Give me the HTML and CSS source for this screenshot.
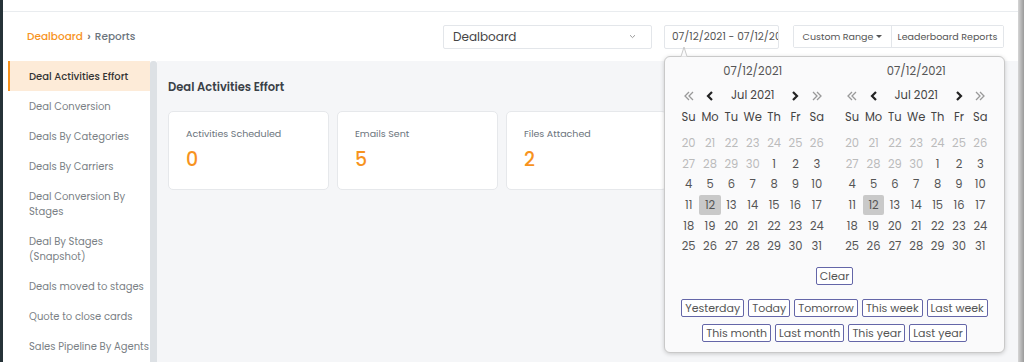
FILE: index.html
```html
<!DOCTYPE html>
<html lang="en">
<head>
    <meta charset="UTF-8" />
    <meta name="viewport" content="width=device-width, initial-scale=1.0" />
    <title>Reports</title>
    <link rel="stylesheet" href="styles.css">
</head>
<body>
<div class="app">
    <div class="rail"></div>

    <div class="page">
        <div class="topbar"></div>

        <header class="header">
            <div class="crumbs">
                <span class="crumb-link">Dealboard</span>
                <span class="crumb-sep">&rsaquo;</span>
                <span class="crumb-current">Reports</span>
            </div>

            <div class="tools">
                <div class="select">
                    <span>Dealboard</span>
                    <svg width="7" height="5" viewBox="0 0 7 5"><path d="M1 1.2 L3.5 3.6 L6 1.2" fill="none" stroke="#999" stroke-width="1"/></svg>
                </div>

                <div class="date-wrap">
                    <div class="date-input">07/12/2021 - 07/12/2021</div>

                    <div class="picker">
                        <svg class="picker-arrow" width="24" height="11" viewBox="0 0 24 11">
                            <path d="M0 10.5 L9 10.5 L12 1 L15 10.5 L24 10.5" fill="#fafafb" stroke="#c9c9c9" stroke-width="1"/>
                        </svg>

                        <div class="months">
                            <div class="cal" id="calLeft"></div>
                            <div class="cal" id="calRight"></div>
                        </div>

                        <div class="clear-row">
                            <button class="pbtn">Clear</button>
                        </div>

                        <div class="preset-row">
                            <button class="pbtn">Yesterday</button>
                            <button class="pbtn">Today</button>
                            <button class="pbtn">Tomorrow</button>
                            <button class="pbtn">This week</button>
                            <button class="pbtn">Last week</button>
                        </div>
                        <div class="preset-row">
                            <button class="pbtn">This month</button>
                            <button class="pbtn">Last month</button>
                            <button class="pbtn">This year</button>
                            <button class="pbtn">Last year</button>
                        </div>
                    </div>
                </div>

                <div class="btn-group">
                    <button class="gbtn gbtn-range">Custom Range <span class="caret"></span></button>
                    <button class="gbtn gbtn-board">Leaderboard Reports</button>
                </div>
            </div>
        </header>

        <div class="content">
            <aside class="sidebar">
                <div class="side-item active">Deal Activities Effort</div>
                <div class="side-item">Deal Conversion</div>
                <div class="side-item">Deals By Categories</div>
                <div class="side-item">Deals By Carriers</div>
                <div class="side-item">Deal Conversion By Stages</div>
                <div class="side-item">Deal By Stages (Snapshot)</div>
                <div class="side-item">Deals moved to stages</div>
                <div class="side-item">Quote to close cards</div>
                <div class="side-item">Sales Pipeline By Agents</div>
            </aside>
            <div class="side-scroll"></div>

            <main class="main">
                <h2 class="main-title">Deal Activities Effort</h2>
                <div class="cards">
                    <div class="card">
                        <div class="card-label">Activities Scheduled</div>
                        <div class="card-value">0</div>
                    </div>
                    <div class="card">
                        <div class="card-label">Emails Sent</div>
                        <div class="card-value">5</div>
                    </div>
                    <div class="card">
                        <div class="card-label">Files Attached</div>
                        <div class="card-value">2</div>
                    </div>
                    <div class="card">
                        <div class="card-label">Calls Logged</div>
                        <div class="card-value">0</div>
                    </div>
                    <div class="card">
                        <div class="card-label">Notes Added</div>
                        <div class="card-value">1</div>
                    </div>
                </div>
            </main>
        </div>
    </div>

    <div class="edge"></div>
</div>

<script>
    function chevron(dir, dbl) {
        var d = dir === "left" ? "M6 1 L2 5 L6 9" : "M2 1 L6 5 L2 9";
        if (dbl) {
            var d2 = dir === "left" ? "M10 1 L6 5 L10 9" : "M6 1 L10 5 L6 9";
            return '<svg width="12" height="10" viewBox="0 0 12 10"><path d="' + d + ' ' + d2 + '" fill="none" stroke="#999" stroke-width="1.3"/></svg>';
        }
        return '<svg width="8" height="10" viewBox="0 0 8 10"><path d="' + d + '" fill="none" stroke="#222" stroke-width="2.2"/></svg>';
    }

    function buildCalendar(el) {
        var html = '<div class="cal-title">07/12/2021</div>';
        html += '<div class="cal-nav">' +
            '<span class="nav-cell">' + chevron("left", true) + '</span>' +
            '<span class="nav-cell">' + chevron("left", false) + '</span>' +
            '<span class="nav-month">Jul 2021</span>' +
            '<span class="nav-cell">' + chevron("right", false) + '</span>' +
            '<span class="nav-cell">' + chevron("right", true) + '</span>' +
            '</div>';

        var days = ["Su", "Mo", "Tu", "We", "Th", "Fr", "Sa"];
        html += '<div class="cal-head">';
        days.forEach(function (d) { html += '<span>' + d + '</span>'; });
        html += '</div><div class="cal-grid">';

        var prev = [20, 21, 22, 23, 24, 25, 26, 27, 28, 29, 30];
        prev.forEach(function (n) { html += '<span class="day muted">' + n + '</span>'; });
        for (var i = 1; i <= 31; i++) {
            html += '<span class="day' + (i === 12 ? ' selected' : '') + '">' + i + '</span>';
        }
        html += '</div>';
        el.innerHTML = html;
    }

    buildCalendar(document.getElementById("calLeft"));
    buildCalendar(document.getElementById("calRight"));
</script>
</body>
</html>
```

FILE: styles.css
```css
body {
    margin: 0;
    padding: 0;
    font-family: 'Poppins', 'Open Sans', sans-serif;
    background: #fff;
    color: #555;
    overflow: hidden;
}

.app {
    display: flex;
    height: 362px;
}

.rail {
    width: 3px;
    background-color: #263238;
    flex-shrink: 0;
}

.page {
    flex-grow: 1;
    display: flex;
    flex-direction: column;
    min-width: 0;
}

.edge {
    width: 6px;
    flex-shrink: 0;
    background: linear-gradient(90deg, #d6d6d6, #9a9a9a);
}

.topbar {
    height: 11px;
    flex-shrink: 0;
    border-bottom: 1px solid #e9ecef;
}

/* header with breadcrumb and report tools */
.header {
    height: 49px;
    flex-shrink: 0;
    display: flex;
    align-items: center;
    padding-left: 24px;
}

.crumbs {
    font-size: 10.5px;
    font-weight: 500;
    display: flex;
    align-items: center;
    gap: 4px;
}

.crumb-link {
    color: #f7931e;
}

.crumb-sep {
    color: #777;
    font-size: 13px;
}

.crumb-current {
    color: #6c757d;
}

.tools {
    margin-left: auto;
    margin-right: 14px;
    display: flex;
    align-items: center;
}

.select {
    width: 209px;
    height: 24px;
    box-sizing: border-box;
    border: 1px solid #e3e6ea;
    border-radius: 2px;
    display: flex;
    align-items: center;
    justify-content: space-between;
    padding: 0 15px 0 9px;
    font-size: 12px;
    color: #444;
}

.date-wrap {
    position: relative;
    margin-left: 12px;
}

.date-input {
    width: 115px;
    height: 24px;
    box-sizing: border-box;
    border: 1px solid #e3e6ea;
    border-radius: 2px;
    padding: 0 0 0 7px;
    font-size: 10.5px;
    line-height: 22px;
    color: #555;
    white-space: nowrap;
    overflow: hidden;
}

.btn-group {
    display: flex;
    margin-left: 14px;
    border: 1px solid #e3e6ea;
    border-radius: 2px;
}

.gbtn {
    font-family: inherit;
    height: 21px;
    border: none;
    background: #fff;
    font-size: 9.5px;
    color: #555;
    padding: 0;
    display: flex;
    align-items: center;
    justify-content: center;
    gap: 3px;
}

.gbtn-range {
    width: 98px;
    border-right: 1px solid #e3e6ea;
}

.gbtn-board {
    width: 111px;
}

.caret {
    width: 0;
    height: 0;
    border-left: 3px solid transparent;
    border-right: 3px solid transparent;
    border-top: 3px solid #555;
}

/* date range picker */
.picker {
    position: absolute;
    top: 31px;
    left: 0;
    width: 341px;
    height: 297px;
    box-sizing: border-box;
    background: #fafafb;
    border: 1px solid #c9c9c9;
    border-radius: 6px;
    box-shadow: 0 1px 4px rgba(0, 0, 0, 0.18);
    padding: 6px 13px 0 13px;
    z-index: 10;
}

.picker-arrow {
    position: absolute;
    top: -11px;
    left: 7px;
}

.months {
    display: flex;
    gap: 14px;
}

.cal {
    width: 150px;
}

.cal-title {
    text-align: center;
    font-size: 11.5px;
    line-height: 16px;
    height: 16px;
    color: #555;
    margin-bottom: 7px;
}

.cal-nav {
    display: grid;
    grid-template-columns: 21.4px 21.4px 1fr 21.4px 21.4px;
    height: 20px;
    align-items: center;
    font-size: 11.5px;
    color: #444;
}

.nav-cell {
    display: flex;
    justify-content: center;
}

.nav-month {
    text-align: center;
}

.cal-head {
    display: grid;
    grid-template-columns: repeat(7, 1fr);
    height: 20px;
    margin-top: 2px;
    margin-bottom: 6px;
    align-items: center;
    text-align: center;
    font-size: 11.5px;
    color: #444;
}

.cal-grid {
    display: grid;
    grid-template-columns: repeat(7, 1fr);
    grid-auto-rows: 20.6px;
}

.day {
    display: flex;
    align-items: center;
    justify-content: center;
    font-size: 11.5px;
    color: #555;
}

.day.muted {
    color: #bbb;
}

.day.selected {
    background: #c9c9c9;
    border-radius: 2px;
    margin: 0 0 1px 0;
}

.clear-row {
    display: flex;
    justify-content: center;
    margin-top: 10px;
}

.preset-row {
    display: flex;
    justify-content: center;
    gap: 4px;
    margin-top: 7px;
}

.clear-row + .preset-row {
    margin-top: 14px;
}

.pbtn {
    font-family: inherit;
    height: 18px;
    box-sizing: border-box;
    padding: 0 3px;
    background: #fff;
    border: 1px solid #6466a8;
    border-radius: 2px;
    font-size: 11px;
    color: #555;
    line-height: 16px;
}

/* content below header */
.content {
    flex-grow: 1;
    display: flex;
    min-height: 0;
}

.sidebar {
    width: 147px;
    flex-shrink: 0;
    box-sizing: border-box;
    padding-left: 5px;
    background: #fff;
}

.side-item {
    padding: 7.5px 0 7.5px 19px;
    font-size: 10px;
    line-height: 15px;
    color: #7a7f85;
    border-left: 2px solid transparent;
}

.side-item.active {
    background: #fdebd8;
    border-left-color: #f7931e;
    color: #333;
    font-weight: 500;
}

.side-scroll {
    width: 7px;
    flex-shrink: 0;
    background: #dde1e5;
    border-radius: 3px 3px 0 0;
}

.main {
    flex-grow: 1;
    background: #f5f6f8;
    padding: 0 11px;
    min-width: 0;
}

.main-title {
    margin: 18px 0 0;
    font-size: 11.5px;
    line-height: 16px;
    font-weight: 600;
    color: #3a4047;
}

.cards {
    display: flex;
    gap: 8px;
    margin-top: 16px;
}

.card {
    width: 161px;
    height: 79px;
    box-sizing: border-box;
    background: #fff;
    border: 1px solid #e6e8eb;
    border-radius: 5px;
    padding: 15px 0 0 17px;
}

.card-label {
    font-size: 9.5px;
    line-height: 14px;
    color: #6c757d;
}

.card-value {
    margin-top: 8px;
    font-size: 19px;
    line-height: 22px;
    color: #f7931e;
    font-weight: 500;
}
```
